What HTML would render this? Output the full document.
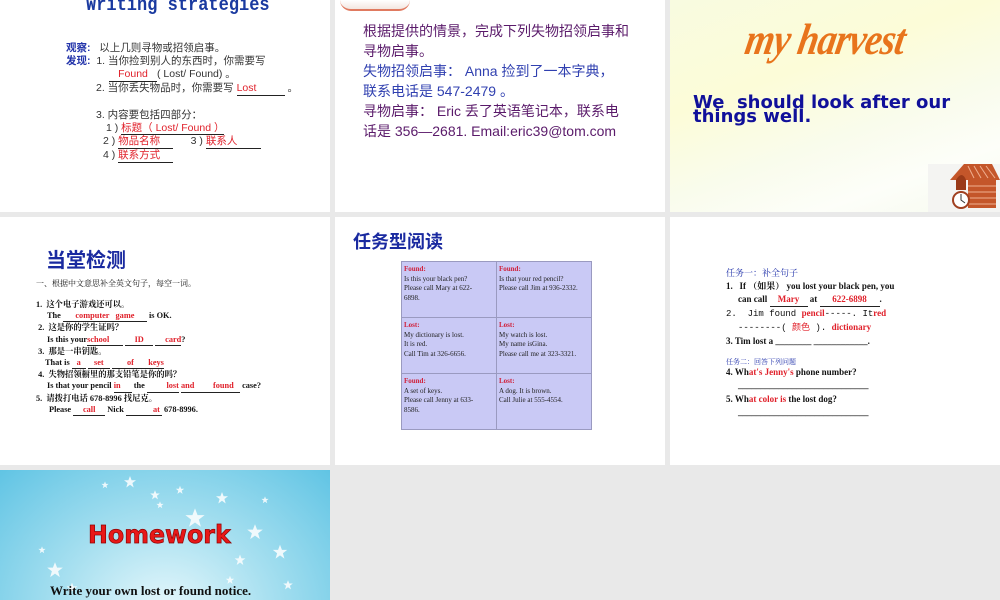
<!DOCTYPE html>
<html><head><meta charset="utf-8"><style>
*{margin:0;padding:0;box-sizing:border-box}
body{width:1000px;height:600px;background:#e9e9e9;position:relative;overflow:hidden;font-family:"Liberation Sans","Noto Sans CJK SC",sans-serif}
.s{position:absolute;background:#fff;overflow:hidden}
.a{position:absolute;white-space:nowrap}
.r{color:#e0202a}
.u{border-bottom:1px solid #222;display:inline-block}
.ser{font-family:"Liberation Serif","Noto Serif CJK SC",serif}
table{border-collapse:collapse;background:#c9c9f5;font-family:"Liberation Serif",serif;font-size:7px;line-height:9.5px;color:#222}
td{border:1px solid #9a9ac0;vertical-align:top;padding:3px 2px;width:95px;height:56px}
td b{color:#d0203a}
</style></head><body>

<!-- slide 1 -->
<div class="s" style="left:0;top:0;width:330px;height:212px">
<div class="a" style="left:86px;top:-5px;font-family:'Liberation Mono',monospace;font-weight:bold;font-size:17px;color:#1a3aa0;transform:scaleY(1.15);transform-origin:top left">Writing strategies</div>
<div style="position:absolute;left:66px;top:42px;font-size:10.5px;line-height:13px;color:#333">
<div><span style="color:#2233aa;font-weight:bold">观察:</span>&nbsp;&nbsp; 以上几则寻物或招领启事。</div>
<div><span style="color:#2233aa;font-weight:bold">发现:</span>&nbsp; 1. 当你捡到别人的东西时，你需要写</div>
<div style="padding-left:43px"><span class="u r" style="width:48px;text-align:center">Found</span>( Lost/ Found) 。</div>
<div style="padding-left:30px">2. 当你丢失物品时，你需要写 <span class="u r" style="width:48px">Lost</span> 。</div>
<div style="height:13px"></div>
<div style="padding-left:30px">3. 内容要包括四部分：</div>
<div style="padding-left:40px">1 ) <span class="r" style="border-bottom:1px solid #222">标题（ Lost/ Found ）</span></div>
<div style="padding-left:37px">2 ) <span class="u r" style="width:55px">物品名称</span> &nbsp;&nbsp;&nbsp;&nbsp;&nbsp;3 ) <span class="u r" style="width:55px">联系人</span></div>
<div style="padding-left:37px">4 ) <span class="u r" style="width:55px">联系方式</span></div>
</div>
</div>

<!-- slide 2 -->
<div class="s" style="left:335px;top:0;width:330px;height:212px">
<div style="position:absolute;left:5px;top:0;width:70px;height:11px;background:linear-gradient(#fff,#f3e6e0);border-radius:0 0 40px 40px;border-bottom:2px solid #e07a60"></div>
<div style="position:absolute;left:28px;top:21px;font-size:14px;line-height:20px;color:#5a1a6a">
<div>根据提供的情景，完成下列失物招领启事和</div>
<div>寻物启事。</div>
<div style="color:#3040b0">失物招领启事： Anna 捡到了一本字典，</div>
<div style="color:#3040b0">联系电话是 547-2479 。</div>
<div>寻物启事： Eric 丢了英语笔记本，联系电</div>
<div>话是 356—2681. Email:eric39@tom.com</div>
</div>
</div>

<!-- slide 3 -->
<div class="s" style="left:670px;top:0;width:330px;height:212px;background:linear-gradient(160deg,#f8fbe0 0%,#fcfcd8 35%,#f9fcec 60%,#fdfef9 80%,#f6faee 100%)">
<div class="a" style="left:62px;top:14px;font-family:'Liberation Serif',serif;font-style:italic;font-weight:bold;font-size:44px;color:#e8741c;transform:scaleX(0.85) skewX(-12deg);letter-spacing:-1px">my harvest</div>
<div style="position:absolute;left:23px;top:96px;font-family:'DejaVu Sans',sans-serif;font-weight:bold;font-size:18px;line-height:14px;color:#10109a">We&nbsp; should look after our<br>things well.</div>
<div style="position:absolute;left:258px;top:164px;width:72px;height:48px;background:#f4f4f2"></div>
<svg style="position:absolute;left:274px;top:160px" width="56" height="52" viewBox="0 0 56 52">
<polygon points="6,20 20,4 48,4 56,20" fill="#c4562a"/>
<g stroke="#f0b090" stroke-width="1"><line x1="24" y1="6" x2="30" y2="18"/><line x1="30" y1="6" x2="37" y2="18"/><line x1="36" y1="6" x2="44" y2="18"/><line x1="42" y1="6" x2="51" y2="18"/></g>
<rect x="24" y="20" width="28" height="28" fill="#c4562a"/>
<g stroke="#f0b090"><line x1="24" y1="26" x2="52" y2="26"/><line x1="24" y1="32" x2="52" y2="32"/><line x1="24" y1="38" x2="52" y2="38"/><line x1="24" y1="44" x2="52" y2="44"/></g>
<path d="M12 30 V20 Q18 10 22 20 V30 Z" fill="#9a3a18"/>
<circle cx="17" cy="40" r="8" fill="#fff" stroke="#a04020" stroke-width="2"/>
<path d="M17 34 V40 L21 43" stroke="#333" fill="none"/>
</svg>
</div>

<!-- slide 4 -->
<div class="s ser" style="left:0;top:217px;width:330px;height:248px;color:#111">
<div class="a" style="left:46px;top:27px;font-size:20px;font-weight:bold;color:#1a2aa0;font-family:'Liberation Sans','Noto Sans CJK SC',sans-serif">当堂检测</div>
<div class="a" style="left:36px;top:61px;font-size:8px">一、根据中文意思补全英文句子，每空一词。</div>
<div style="position:absolute;left:36px;top:82px;font-size:8.3px;line-height:11.2px;font-weight:bold">
<div>1.&nbsp; 这个电子游戏还可以。</div>
<div style="padding-left:11px">The <span class="u r" style="width:84px;text-align:center">computer &nbsp; game</span> is OK.</div>
<div>&nbsp;2.&nbsp; 这是你的学生证吗？</div>
<div style="padding-left:11px">Is this your<span class="u r" style="width:36px">school</span> <span class="u r" style="width:28px;text-align:center">ID</span> <span class="u r" style="width:26px;text-align:right">card</span>?</div>
<div>&nbsp;3.&nbsp; 那是一串钥匙。</div>
<div style="padding-left:9px">That is <span class="u r" style="width:14px;text-align:center">a</span> <span class="u r" style="width:22px;text-align:center">set</span> <span class="u r" style="width:22px;text-align:right">of</span><span class="u r" style="width:30px;text-align:right">keys</span></div>
<div>&nbsp;4.&nbsp; 失物招领橱里的那支铅笔是你的吗？</div>
<div style="padding-left:11px">Is that your pencil <span class="u r" style="width:18px">in</span> the <span class="u r" style="width:32px;text-align:right">lost</span> <span class="u r" style="width:32px">and</span><span class="u r" style="width:27px">found</span> case?</div>
<div>5.&nbsp; 请拨打电话 678-8996 找尼克。</div>
<div style="padding-left:13px">Please <span class="u r" style="width:32px;text-align:center">call</span> Nick <span class="u r" style="width:36px;text-align:right">at&nbsp;</span> 678-8996.</div>
</div>
</div>

<!-- slide 5 -->
<div class="s" style="left:335px;top:217px;width:330px;height:248px">
<div class="a" style="left:18px;top:11px;font-size:18px;color:#1a2aa0;font-weight:bold">任务型阅读</div>
<table style="position:absolute;left:66px;top:44px">
<tr><td><b>Found:</b><br>Is this your black pen?<br>Please call Mary at 622-<br>6898.</td><td><b>Found:</b><br>Is that your red pencil?<br>Please call Jim at 936-2332.</td></tr>
<tr><td><b>Lost:</b><br>My dictionary is lost.<br>It is red.<br>Call Tim at 326-6656.</td><td><b>Lost:</b><br>My watch is lost.<br>My name isGina.<br>Please call me at 323-3321.</td></tr>
<tr><td><b>Found:</b><br>A set of keys.<br>Please call Jenny at 633-<br>8586.</td><td><b>Lost:</b><br>A dog. It is brown.<br>Call Julie at 555-4554.</td></tr>
</table>
</div>

<!-- slide 6 -->
<div class="s ser" style="left:670px;top:217px;width:330px;height:248px;color:#111;font-weight:bold">
<div class="a" style="left:56px;top:49px;font-size:9px;color:#2233aa;font-weight:normal">任务一：补全句子</div>
<div style="position:absolute;left:56px;top:63px;font-size:9px;line-height:13px">
<div>1.&nbsp;&nbsp; If （如果） you lost your black pen, you</div>
<div style="padding-left:12px">can call <span class="u r" style="width:38px;text-align:center">Mary</span> at <span class="u r" style="width:60px;text-align:center">622-6898</span>.</div>
<div style="font-family:'Liberation Mono',monospace;font-weight:normal">2.&nbsp; Jim found <span class="r" style="font-family:'Liberation Serif',serif;font-weight:bold">pencil</span>-----. It<span class="r" style="font-family:'Liberation Serif',serif;font-weight:bold">red</span></div>
<div style="padding-left:12px;font-family:'Liberation Mono',monospace;font-weight:normal">--------( <span class="r">颜色</span> ). <span class="r" style="font-family:'Liberation Serif',serif;font-weight:bold">dictionary</span></div>
<div>3. Tim lost a ________ ____________.</div>
</div>
<div class="a" style="left:56px;top:140px;font-size:7px;color:#2233aa;font-weight:normal">任务二：回答下列问题</div>
<div style="position:absolute;left:56px;top:149px;font-size:9px;line-height:13px">
<div>4. Wh<span class="r">at's Jenny's</span> phone number?</div>
<div style="padding-left:12px">_____________________________</div>
<div style="margin-top:1px">5. Wh<span class="r">at color is</span> the lost dog?</div>
<div style="padding-left:12px">_____________________________</div>
</div>
</div>

<!-- slide 7 -->
<div class="s" style="left:0;top:470px;width:330px;height:130px;background:radial-gradient(ellipse at 50% 110%,#e8f8fc 0%,#a8e0f0 45%,#60c4e4 100%)">
<svg style="position:absolute;left:0;top:0" width="330" height="130">
<defs><polygon id="st" points="0,-6 1.6,-1.8 6,-1.8 2.4,1 3.7,5.5 0,2.8 -3.7,5.5 -2.4,1 -6,-1.8 -1.6,-1.8"/></defs>
<g fill="#fff" opacity="0.85">
<use href="#st" transform="translate(130,12)"/><use href="#st" transform="translate(105,15) scale(.6)"/><use href="#st" transform="translate(155,25) scale(.8)"/><use href="#st" transform="translate(195,48) scale(1.6)"/><use href="#st" transform="translate(222,28)"/><use href="#st" transform="translate(180,20) scale(.7)"/><use href="#st" transform="translate(255,62) scale(1.3)"/><use href="#st" transform="translate(280,82) scale(1.2)"/><use href="#st" transform="translate(55,100) scale(1.3)"/><use href="#st" transform="translate(42,80) scale(.6)"/><use href="#st" transform="translate(72,118) scale(.9)"/><use href="#st" transform="translate(240,90) scale(.9)"/><use href="#st" transform="translate(288,115) scale(.8)"/><use href="#st" transform="translate(160,35) scale(.6)"/><use href="#st" transform="translate(265,30) scale(.6)"/><use href="#st" transform="translate(230,110) scale(.7)"/>
</g></svg>
<div class="a" style="left:88px;top:50px;font-size:25px;font-weight:bold;color:#e81818;font-family:'DejaVu Sans',sans-serif;transform:scaleX(0.95);transform-origin:left;-webkit-text-stroke:0.7px #8a0000">Homework</div>
<div class="a ser" style="left:50px;top:113px;font-size:13px;font-weight:bold;color:#111">Write your own lost or found notice.</div>
</div>

</body></html>
